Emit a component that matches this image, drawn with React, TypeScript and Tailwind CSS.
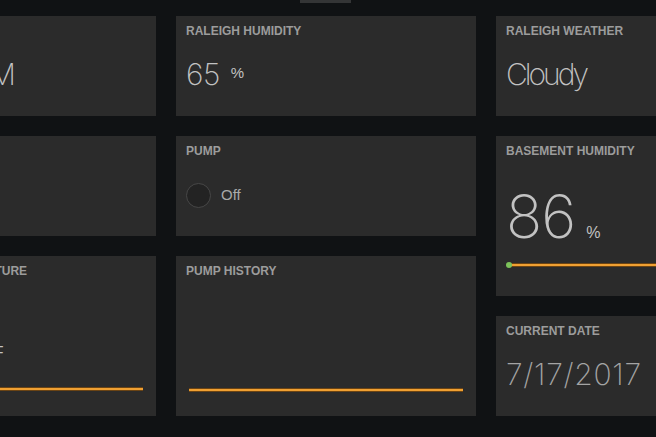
import React from 'react';

type PanelProps = {
  title: string;
  height: string;
  children?: React.ReactNode;
};

const Panel: React.FC<PanelProps> = ({ title, height, children }) => (
  <div className={`w-[300px] ${height} shrink-0 bg-[#2b2b2b] px-[10px] pt-[8px] overflow-hidden`}>
    <h2 className="font-['Liberation_Sans',Arial,sans-serif] text-[12px] leading-[14px] font-bold text-[#9c9c9c] whitespace-nowrap">
      {title}
    </h2>
    {children}
  </div>
);

const Sparkline: React.FC<{ dot?: boolean }> = ({ dot }) => (
  <svg className="block w-full h-[12px] overflow-visible" viewBox="0 0 274 12" preserveAspectRatio="none">
    <line x1="3" y1="6" x2="274" y2="6" stroke="#6b4414" strokeWidth="4" />
    <line x1="3" y1="6" x2="274" y2="6" stroke="#f0a032" strokeWidth="2" />
    {dot && <circle cx="3" cy="6" r="3" fill="#7cc25a" />}
  </svg>
);

type TextValueProps = { value: string; units?: string; dim?: boolean; tight?: boolean };

const TextValue: React.FC<TextValueProps> = ({ value, units, dim, tight }) => (
  <div className="mt-[18px] flex items-start whitespace-nowrap">
    <span
      className={`font-['Inter',sans-serif] font-extralight text-[30px] leading-[36px] ${
        tight ? 'tracking-[-3px]' : dim ? 'tracking-[0.7px]' : 'tracking-[-0.5px]'
      } ${dim ? 'text-[#a4a4a4]' : 'text-[#c2c2c2]'}`}
    >
      {value}
    </span>
    {units && (
      <span className="ml-[11px] mt-[9px] font-['Liberation_Sans',Arial,sans-serif] text-[15px] leading-[16px] text-[#c2c2c2]">
        {units}
      </span>
    )}
  </div>
);

const BigValue: React.FC<{ value: string; units: string; tight?: boolean }> = ({ value, units, tight }) => (
  <div className="mt-[28px] flex items-baseline whitespace-nowrap">
    <span
      className={`font-['Inter',sans-serif] font-extralight text-[60px] leading-[60px] ${
        tight ? 'tracking-[-2.5px]' : 'tracking-[-1px]'
      } text-[#c2c2c2]`}
    >
      {value}
    </span>
    <span className="ml-[11px] font-['Liberation_Sans',Arial,sans-serif] text-[16px] text-[#c2c2c2]">{units}</span>
  </div>
);

const App: React.FC = () => {
  return (
    <div className="w-[656px] h-[437px] overflow-hidden bg-[#101214]">
      {/* header toggle tab */}
      <div className="ml-[300px] w-[51px] h-[3px] bg-[#343536]" />

      {/* board */}
      <div className="mt-[13px] ml-[-144px] flex gap-[20px] items-start">
        <div className="flex flex-col gap-[20px]">
          <Panel title="CURRENT TIME" height="h-[100px]">
            <TextValue value="9:42:18 PM" />
          </Panel>
          <Panel title="BASEMENT PUMP" height="h-[100px]" />
          <Panel title="BASEMENT TEMPERATURE" height="h-[160px]">
            <BigValue value="72.6" units="°F" tight />
            <div className="mt-[17px] pr-[3px]">
              <Sparkline />
            </div>
          </Panel>
        </div>

        <div className="flex flex-col gap-[20px]">
          <Panel title="RALEIGH HUMIDITY" height="h-[100px]">
            <TextValue value="65" units="%" />
          </Panel>
          <Panel title="PUMP" height="h-[100px]">
            <div className="mt-[25px] flex items-center gap-[10px]">
              <div className="w-[25px] h-[25px] rounded-full border-[1.5px] border-[#474747] bg-[#232323]" />
              <span className="font-['Liberation_Sans',Arial,sans-serif] text-[15px] text-[#a9a9a9]">Off</span>
            </div>
          </Panel>
          <Panel title="PUMP HISTORY" height="h-[160px]">
            <div className="mt-[106px] pr-[3px]">
              <Sparkline />
            </div>
          </Panel>
        </div>

        <div className="flex flex-col gap-[20px]">
          <Panel title="RALEIGH WEATHER" height="h-[100px]">
            <TextValue value="Cloudy" tight />
          </Panel>
          <Panel title="BASEMENT HUMIDITY" height="h-[160px]">
            <BigValue value="86" units="%" />
            <div className="mt-[13px] pr-[3px]">
              <Sparkline dot />
            </div>
          </Panel>
          <Panel title="CURRENT DATE" height="h-[100px]">
            <TextValue value="7/17/2017" dim />
          </Panel>
        </div>
      </div>
    </div>
  );
};

export default App;
